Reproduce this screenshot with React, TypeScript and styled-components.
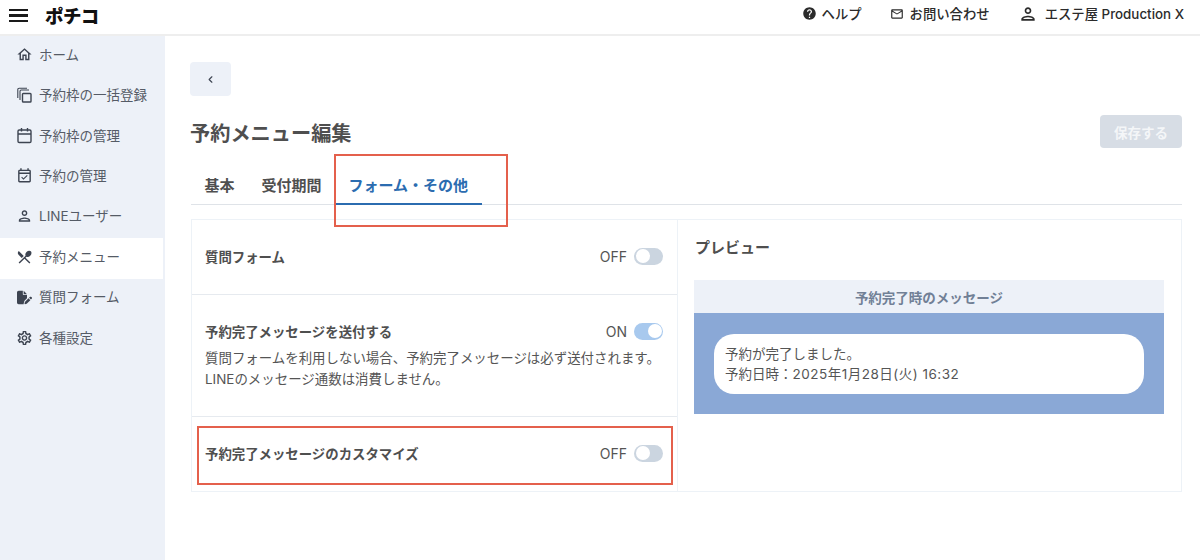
import React from "react";
import styled, { createGlobalStyle } from "styled-components";
import { ChevronLeft } from "lucide-react";
import {
  MdHelp,
  MdOutlineMailOutline,
  MdOutlinePerson,
  MdOutlineHome,
  MdOutlineEventAvailable,
  MdRestaurantMenu,
  MdOutlineSettings,
} from "react-icons/md";
import { FaFilePen } from "react-icons/fa6";

const Global = createGlobalStyle`
  html, body { margin: 0; padding: 0; background: #fff; }
  body { font-family: Inter, "Noto Sans CJK JP", sans-serif; color: #4a4a4a; }
  * { box-sizing: border-box; }
`;

const Page = styled.div`
  position: relative;
  width: 1200px;
  height: 560px;
  overflow: hidden;
  display: flex;
  flex-direction: column;
`;

const Header = styled.header`
  height: 36px;
  flex: none;
  display: flex;
  align-items: center;
  justify-content: space-between;
  padding: 0 16px 7px 9px;
  border-bottom: 2px solid #eeeeee;
`;

const Brand = styled.div`
  display: flex;
  align-items: center;
  gap: 17px;
  padding-top: 4px;
`;

const Burger = styled.div`
  width: 19px;
  height: 13px;
  display: flex;
  flex-direction: column;
  justify-content: space-between;
  & > i { display: block; height: 2.4px; background: #1a1a1a; }
`;

const Logo = styled.div`
  font-size: 18.5px;
  line-height: 20px;
  font-weight: 900;
  color: #111;
  letter-spacing: -0.6px;
`;

const HeaderNav = styled.nav`
  display: flex;
  align-items: center;
`;

const HeaderLink = styled.div<{ $ml: number; $gap: number }>`
  display: flex;
  align-items: center;
  gap: ${(p) => p.$gap}px;
  margin-left: ${(p) => p.$ml}px;
  font-size: 13.35px;
  font-weight: 500;
  color: #2b2b2b;
`;

const Body = styled.div`
  flex: 1;
  display: flex;
  min-height: 0;
`;

const Sidebar = styled.aside`
  width: 165px;
  flex: none;
  background: #edf1f8;
  padding-right: 2px;
`;

const NavItem = styled.div<{ $active?: boolean }>`
  height: 40.45px;
  display: flex;
  align-items: center;
  gap: 6px;
  padding-left: 16px;
  padding-bottom: 5px;
  font-size: 13.5px;
  color: #555b66;
  background: ${(p) => (p.$active ? "#fff" : "transparent")};
`;

const NavIcon = styled.span`
  width: 17px;
  height: 17px;
  flex: none;
  margin-top: 2px;
  display: flex;
  align-items: center;
  justify-content: center;
  color: #3d4451;
`;

const Main = styled.main`
  flex: 1;
  padding: 26px 18px 0 25px;
  min-width: 0;
`;

const BackButton = styled.button`
  display: flex;
  align-items: center;
  justify-content: center;
  width: 41px;
  height: 34px;
  padding: 0;
  border: none;
  border-radius: 4px;
  background: #edf1f8;
  color: #3d4451;
`;

const TitleRow = styled.div`
  display: flex;
  align-items: center;
  justify-content: space-between;
  margin-top: 19px;
  height: 33px;
`;

const Title = styled.h1`
  margin: 0;
  padding-top: 4px;
  font-size: 20.2px;
  line-height: 32px;
  font-weight: 700;
  color: #4f4f4f;
`;

const SaveButton = styled.button`
  width: 82px;
  height: 33px;
  border: none;
  border-radius: 4px;
  background: #d7dde5;
  color: #f4f6f8;
  font: 700 13.5px Inter, "Noto Sans CJK JP", sans-serif;
`;

const Tabs = styled.div`
  display: flex;
  margin-top: 17px;
  height: 40px;
  margin-left: 1px;
  border-bottom: 1px solid #dfe3e8;
`;

const Tab = styled.div<{ $active?: boolean }>`
  height: 40px;
  padding: ${(p) => (p.$active ? "0 14px 0 13.5px" : "0 13.5px 2px")};
  display: flex;
  align-items: center;
  font-size: 15px;
  font-weight: 700;
  color: ${(p) => (p.$active ? "#2b6cb0" : "#4f4f4f")};
  border-bottom: ${(p) => (p.$active ? "2px solid #2b6cb0" : "none")};
`;

const Card = styled.section`
  display: grid;
  grid-template-columns: 486px 1fr;
  margin: 14px 0 0 1px;
  height: 273px;
  border: 1px solid #edf2f7;
`;

const Settings = styled.div`
  display: flex;
  flex-direction: column;
  border-right: 1px solid #edf2f7;
`;

const SettingRow = styled.div<{ $h: number; $top: number; $last?: boolean }>`
  height: ${(p) => p.$h}px;
  flex: none;
  padding: ${(p) => p.$top}px 14px 0 13px;
  border-bottom: ${(p) => (p.$last ? "none" : "1px solid #e6eaef")};
`;

const SettingHead = styled.div`
  display: flex;
  align-items: center;
  justify-content: space-between;
  height: 22px;
`;

const SettingLabel = styled.div`
  font-size: 13.4px;
  font-weight: 700;
  color: #4f4f4f;
`;

const ToggleWrap = styled.div`
  display: flex;
  align-items: center;
  gap: 7px;
  font-size: 14px;
  color: #555;
`;

const Track = styled.div<{ $on?: boolean }>`
  position: relative;
  width: 29px;
  height: 17px;
  border-radius: 9px;
  background: ${(p) => (p.$on ? "#a8c9ee" : "#cbd5e0")};
`;

const Knob = styled.div<{ $on?: boolean }>`
  position: absolute;
  top: 1.5px;
  left: ${(p) => (p.$on ? "13.5px" : "1.5px")};
  width: 14px;
  height: 14px;
  border-radius: 50%;
  background: #fff;
`;

const Description = styled.p`
  margin: 6px 0 0;
  font-size: 13.45px;
  line-height: 21px;
  color: #555;
  white-space: nowrap;
`;

const Preview = styled.div`
  padding: 16px 17px 0 16px;
`;

const PreviewTitle = styled.h2`
  margin: 0 0 0 1px;
  height: 24px;
  line-height: 24px;
  font-size: 15px;
  font-weight: 700;
  color: #4f4f4f;
`;

const PreviewHead = styled.div`
  margin-top: 20px;
  height: 33px;
  display: flex;
  align-items: center;
  justify-content: center;
  background: #edf1f8;
  font-size: 13.5px;
  font-weight: 700;
  color: #718096;
`;

const ChatArea = styled.div`
  height: 101px;
  padding: 21px 20px 0;
  background: #8aa8d6;
`;

const Bubble = styled.div`
  height: 60px;
  padding: 10px 11px;
  border-radius: 20px;
  background: #fff;
  font-size: 13.5px;
  line-height: 20px;
  color: #555;
`;

const DateText = styled.span`
  letter-spacing: 0.5px;
`;

const Callout = styled.div<{ $x: number; $y: number; $w: number; $h: number }>`
  position: absolute;
  left: ${(p) => p.$x}px;
  top: ${(p) => p.$y}px;
  width: ${(p) => p.$w}px;
  height: ${(p) => p.$h}px;
  border: 2px solid #e4604c;
  pointer-events: none;
`;

const CalendarIcon = () => (
  <svg width="17" height="17" viewBox="0 0 17 17" fill="none" stroke="currentColor" strokeWidth="1.4">
    <rect x="2" y="3" width="13" height="12.5" rx="1.2" />
    <path d="M2 7h13M5.5 1v3.5M11.5 1v3.5" />
  </svg>
);

const CopyIcon = () => (
  <svg width="17" height="17" viewBox="0 0 17 17" fill="none" stroke="currentColor" strokeWidth="1.4">
    <rect x="6.5" y="6.5" width="8.5" height="8.5" rx="0.8" />
    <path d="M4 13V4.2C4 3.5 4.5 3 5.2 3H13M1.8 11V2.6C1.8 1.6 2.3 1.2 3.2 1.2H11" strokeWidth="1.1" />
  </svg>
);

const Toggle = ({ on }: { on?: boolean }) => (
  <ToggleWrap>
    {on ? "ON" : "OFF"}
    <Track $on={on}>
      <Knob $on={on} />
    </Track>
  </ToggleWrap>
);

const navItems: { label: string; icon: React.ReactNode; active?: boolean }[] = [
  { label: "ホーム", icon: <MdOutlineHome size={17} /> },
  { label: "予約枠の一括登録", icon: <CopyIcon /> },
  { label: "予約枠の管理", icon: <CalendarIcon /> },
  { label: "予約の管理", icon: <MdOutlineEventAvailable size={18} /> },
  { label: "LINEユーザー", icon: <MdOutlinePerson size={20} /> },
  { label: "予約メニュー", icon: <MdRestaurantMenu size={18} />, active: true },
  { label: "質問フォーム", icon: <FaFilePen size={15} /> },
  { label: "各種設定", icon: <MdOutlineSettings size={18} /> },
];

export default function App() {
  return (
    <Page>
      <Global />
      <Header>
        <Brand>
          <Burger>
            <i />
            <i />
            <i />
          </Burger>
          <Logo>ポチコ</Logo>
        </Brand>
        <HeaderNav>
          <HeaderLink $ml={0} $gap={5}>
            <MdHelp size={15} />
            ヘルプ
          </HeaderLink>
          <HeaderLink $ml={28} $gap={6}>
            <MdOutlineMailOutline size={14} />
            お問い合わせ
          </HeaderLink>
          <HeaderLink $ml={28} $gap={7}>
            <MdOutlinePerson size={20} />
            エステ屋 Production X
          </HeaderLink>
        </HeaderNav>
      </Header>
      <Body>
        <Sidebar>
          {navItems.map((item) => (
            <NavItem key={item.label} $active={item.active}>
              <NavIcon>{item.icon}</NavIcon>
              {item.label}
            </NavItem>
          ))}
        </Sidebar>
        <Main>
          <BackButton aria-label="戻る">
            <ChevronLeft size={11} strokeWidth={2.5} />
          </BackButton>
          <TitleRow>
            <Title>予約メニュー編集</Title>
            <SaveButton>保存する</SaveButton>
          </TitleRow>
          <Tabs>
            <Tab>基本</Tab>
            <Tab>受付期間</Tab>
            <Tab $active>フォーム・その他</Tab>
          </Tabs>
          <Card>
            <Settings>
              <SettingRow $h={75} $top={25}>
                <SettingHead>
                  <SettingLabel>質問フォーム</SettingLabel>
                  <Toggle />
                </SettingHead>
              </SettingRow>
              <SettingRow $h={122} $top={25}>
                <SettingHead>
                  <SettingLabel>予約完了メッセージを送付する</SettingLabel>
                  <Toggle on />
                </SettingHead>
                <Description>
                  質問フォームを利用しない場合、予約完了メッセージは必ず送付されます。
                  <br />
                  LINEのメッセージ通数は消費しません。
                </Description>
              </SettingRow>
              <SettingRow $h={74} $top={25} $last>
                <SettingHead>
                  <SettingLabel>予約完了メッセージのカスタマイズ</SettingLabel>
                  <Toggle />
                </SettingHead>
              </SettingRow>
            </Settings>
            <Preview>
              <PreviewTitle>プレビュー</PreviewTitle>
              <PreviewHead>予約完了時のメッセージ</PreviewHead>
              <ChatArea>
                <Bubble>
                  予約が完了しました。
                  <br />
                  予約日時：<DateText>2025年1月28日(火) 16:32</DateText>
                </Bubble>
              </ChatArea>
            </Preview>
          </Card>
        </Main>
      </Body>
      <Callout $x={334} $y={154} $w={174} $h={73} />
      <Callout $x={197} $y={426} $w={476} $h={59} />
    </Page>
  );
}
